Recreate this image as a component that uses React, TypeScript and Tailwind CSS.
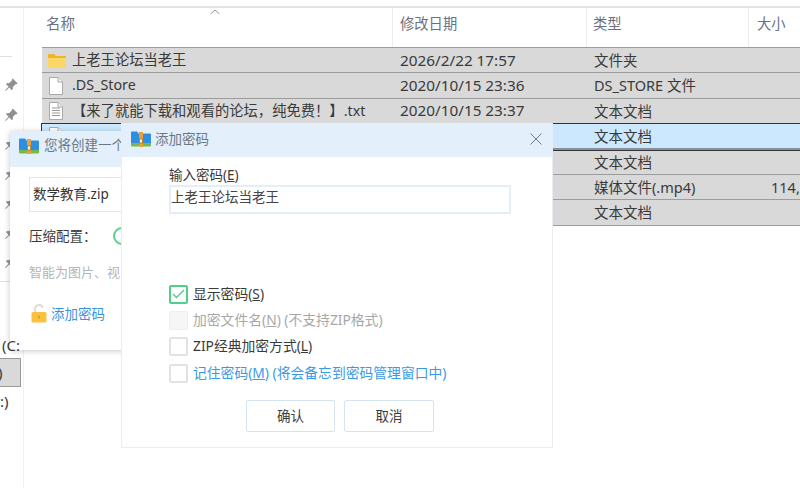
import React from 'react';
import { BsPinAngleFill } from 'react-icons/bs';

const font = 'font-["Noto_Sans","Noto_Sans_CJK_SC",sans-serif]';

const rows = [
  { name: '上老王论坛当老王', date: '2026/2/22 17:57', type: '文件夹', size: '', icon: 'folder' },
  { name: '.DS_Store', date: '2020/10/15 23:36', type: 'DS_STORE 文件', size: '', icon: 'file' },
  { name: '【来了就能下载和观看的论坛，纯免费！】.txt', date: '2020/10/15 23:37', type: '文本文档', size: '', icon: 'text' },
  { name: '', date: '', type: '文本文档', size: '', icon: 'text', active: true },
  { name: '', date: '', type: '文本文档', size: '', icon: '' },
  { name: '', date: '', type: '媒体文件(.mp4)', size: '114,', icon: '' },
  { name: '', date: '', type: '文本文档', size: '', icon: '' },
];

const FolderIcon = () => (
  <svg width="18" height="15" viewBox="0 0 18 15">
    <path d="M0 2a1 1 0 0 1 1-1h5l2 2h9a1 1 0 0 1 1 1v10a1 1 0 0 1-1 1H1a1 1 0 0 1-1-1z" fill="#f0b429" />
    <path d="M0 5h18v9a1 1 0 0 1-1 1H1a1 1 0 0 1-1-1z" fill="#fcd768" />
  </svg>
);

const FileIcon = ({ lines }: { lines?: boolean }) => (
  <svg className="ml-px" width="14" height="18" viewBox="0 0 14 18">
    <path d="M.5.5h8.500l4.500 4.500v12.500H.5z" fill="#fff" stroke="#a9a9a9" />
    <path d="M9 .5V5h4.500" fill="#f3f3f3" stroke="#a9a9a9" />
    {lines && <path d="M3 6h8M3 8.500h8M3 11h8M3 13.500h8" stroke="#9a9a9a" />}
  </svg>
);

const ArchiveIcon = () => (
  <svg width="20" height="16" viewBox="0 0 20 16">
    <path d="M0 1.500a1 1 0 0 1 1-1h5l1.500 2H19a1 1 0 0 1 1 1V12H0z" fill="#2e8fe0" />
    <path d="M0 12h20v2.500a1 1 0 0 1-1 1H1a1 1 0 0 1-1-1z" fill="#79b84a" />
    <rect x="8" y="1" width="4" height="15" fill="#e9a23b" />
    <rect x="8.500" y="8" width="3" height="4" fill="#fff1c9" stroke="#8a5a17" strokeWidth=".6" />
  </svg>
);

const LockIcon = () => (
  <svg width="16" height="19" viewBox="0 0 16 19">
    <path d="M4 8V5a4 4 0 0 1 7.800-1.200" fill="none" stroke="#d9d9d9" strokeWidth="1.800" />
    <rect x="0.500" y="8" width="15" height="10.500" rx="1.500" fill="#f8c23f" />
    <path d="M8 11.500v3" stroke="#d99a1e" strokeWidth="1.500" />
  </svg>
);

const Check = ({ state, children }: { state?: 'on' | 'off'; children: React.ReactNode }) => (
  <label className="flex h-[26.300px] items-center gap-[5px]">
    {state === 'on' ? (
      <span className="flex h-[19px] w-[19px] items-center justify-center rounded-[2px] border-2 border-[#4fd08a] bg-white">
        <svg width="13" height="10" viewBox="0 0 13 10">
          <path d="M1 5l3.500 3.500L12 1" fill="none" stroke="#58c98a" strokeWidth="1.400" />
        </svg>
      </span>
    ) : state === 'off' ? (
      <span className="h-[19px] w-[19px] rounded-[2px] border border-[#efefef] bg-[#f6f6f6]" />
    ) : (
      <span className="h-[19px] w-[19px] rounded-[2px] border-2 border-[#e2e2e2] bg-white" />
    )}
    <span>{children}</span>
  </label>
);

const App = () => {
  return (
    <div className={`relative h-[488px] w-[800px] overflow-hidden bg-white text-[14.300px] text-[#3a3a3a] ${font}`}>
      <div className="mt-[6px] h-[2px] bg-[#e3e3e3]" />
      <div className="flex h-[480px]">
        {/* nav pane */}
        <div className="w-[24px] shrink-0 border-r border-[#f0f0f0]">
          <div className="mt-[48px] h-px w-[12px] bg-[#e0e0e0]" />
          <div className="mt-[21px] flex flex-col gap-[15.500px] pl-[4px] text-[#909090]">
            {[0, 1, 2, 3, 4, 5, 6].map((i) => (
              <BsPinAngleFill key={i} size={14} />
            ))}
          </div>
          <div className="mt-[12px] h-px w-[10px] bg-[#e0e0e0]" />
          <div className="relative z-10 mt-[50px] pl-[2px] text-[15px] leading-[18px] whitespace-nowrap translate-y-[4px]">(C:</div>
          <div className="mt-[8px] flex h-[29px] w-[21px] items-center border border-l-0 border-[#9a9a9a] bg-[#d9d9d9] text-[15px]">
            <span className="-ml-[2px]">)</span>
          </div>
          <div className="mt-[5px] text-[15px] leading-[18px]">:)</div>
        </div>

        {/* file list */}
        <div className="min-w-0 flex-1 pl-[18px]">
          <div className="relative grid h-[39px] grid-cols-[351px_194px_162px_1fr] text-[14.300px] text-[#6a7280]">
            <div className="border-r border-[#ececec] pl-[4px] pt-[5px] text-[14.500px]">名称</div>
            <div className="border-r border-[#ececec] pl-[7px] pt-[5px]">修改日期</div>
            <div className="border-r border-[#ececec] pl-[6px] pt-[5px]">类型</div>
            <div className="pl-[8px] pt-[5px]">大小</div>
            <svg className="absolute left-[168px] top-[1px]" width="10" height="6" viewBox="0 0 10 6">
              <path d="M.5 5L5 1l4.500 4" fill="none" stroke="#9a9a9a" />
            </svg>
          </div>
          <div className="border-t border-[#9c9c9c]">
            {rows.map((r, i) => (
              <div
                key={i}
                className={`grid h-[25.400px] grid-cols-[351px_194px_162px_1fr] items-center whitespace-nowrap border-b leading-none ${
                  r.active ? 'border-b-[2px] border-b-[#8b8f94] bg-[#cce8ff] outline-1 outline-[#30343a]' : 'border-[#9c9c9c] bg-[#d9d9d9]'
                }`}
              >
                <div className="flex items-center">
                  <span className="flex w-[30px] pl-[6px]">
                    {r.icon === 'folder' && <FolderIcon />}
                    {r.icon === 'file' && <FileIcon />}
                    {r.icon === 'text' && <FileIcon lines />}
                  </span>
                  <span>{r.name}</span>
                </div>
                <div className="pl-[7px] text-[15.300px]">{r.date}</div>
                <div className="pl-[7px] text-[14.500px]">{r.type}</div>
                <div className="pl-[22px] text-[14.500px]">{r.size}</div>
              </div>
            ))}
          </div>
        </div>
      </div>

      {/* create archive window, behind */}
      <div className="absolute left-[10px] top-[131px] h-[219px] w-[300px] bg-white shadow-[0_1px_6px_rgba(0,0,0,0.22)]">
        <div className="flex h-[36px] items-center gap-[5px] bg-[#e3f0fc] pb-[7px] pl-[9px] text-[#6b7785]">
          <ArchiveIcon />
          <span className="text-[13.500px]">您将创建一个</span>
        </div>
        <div className="pl-[19px]">
          <div className="mt-[10px] flex h-[35px] w-[200px] items-center border border-[#dfe8f2] pl-[3px] text-[13.500px] text-[#333]">数学教育.zip</div>
          <div className="mt-[14px] flex items-center text-[13.500px]">
            <span className="w-[84px]">压缩配置：</span>
            <span className="h-[18px] w-[18px] rounded-full border-2 border-[#5ccf8d]" />
          </div>
          <div className="mt-[17px] text-[13px] text-[#b5b5b5]">智能为图片、视</div>
          <div className="mt-[21px] flex items-center gap-[4px] text-[13.500px] text-[#3b93dd]">
            <span className="ml-[2px]"><LockIcon /></span>
            添加密码
          </div>
        </div>
      </div>

      {/* password dialog */}
      <div className="absolute left-[121px] top-[123px] h-[325px] w-[432px] border border-t-0 border-[#e7edf3] bg-white">
        <div className="flex h-[34px] items-center bg-[#e3f0fc] pb-[2px] pl-[9px] pr-[10px] text-[#6b7785]">
          <ArchiveIcon />
          <span className="ml-[4px] text-[13.500px]">添加密码</span>
          <svg className="ml-auto" width="12" height="12" viewBox="0 0 12 12">
            <path d="M.5.5l11 11M11.500.5l-11 11" stroke="#6f7a86" />
          </svg>
        </div>
        <div className="pl-[47px]">
          <div className="mt-[8px] text-[13.500px] leading-[20px]">输入密码(<span className="underline">E</span>)</div>
          <div className="flex h-[29px] w-[342px] items-center border-2 border-[#e4eefa] pb-[4px] text-[13.500px] text-[#444]">上老王论坛当老王</div>
          <div className="mt-[67px] text-[13.800px]">
            <Check state="on">显示密码(<span className="underline">S</span>)</Check>
            <Check state="off"><span className="text-[#a8a8a8]">加密文件名(<span className="underline">N</span>) (不支持ZIP格式)</span></Check>
            <Check>ZIP经典加密方式(<span className="underline">L</span>)</Check>
            <Check><span className="text-[#3b9ae6]">记住密码(<span className="underline">M</span>) (将会备忘到密码管理窗口中)</span></Check>
          </div>
          <div className="mt-[14px] flex gap-[9px] pl-[77px] text-[13.500px]">
            <button className="h-[32px] w-[89px] rounded-[2px] border border-[#d5e4f3]">确认</button>
            <button className="h-[32px] w-[90px] rounded-[2px] border border-[#d5e4f3]">取消</button>
          </div>
        </div>
      </div>
    </div>
  );
};

export default App;
